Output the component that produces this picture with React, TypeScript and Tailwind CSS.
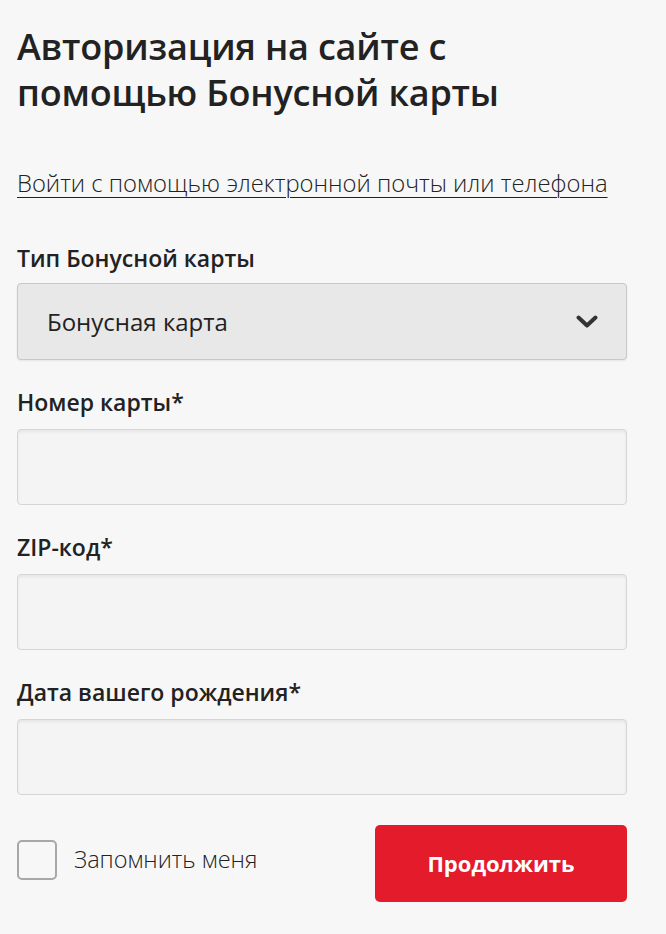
import { useState } from "react"

const font = { fontFamily: '"Open Sans", "Noto Sans", sans-serif' }

function Field({ label }: { label: string }) {
  return (
    <div className="flex flex-col">
      <label className="text-[23px] font-semibold text-[#222] leading-[32px] mb-[11px]">{label}</label>
      <input
        type="text"
        className="h-[76px] w-full rounded-[4px] border border-[#d6d6d6] bg-[#f4f4f4] shadow-[inset_0_2px_3px_rgba(0,0,0,0.06)] outline-none"
      />
    </div>
  )
}

export default function App() {
  const [remember, setRemember] = useState(false)

  return (
    <div className="min-h-[934px] w-[666px] bg-[#f7f7f7] pl-[17px] pr-[39px] pt-[24px]" style={font}>
      <h1 className="text-[36px] font-semibold leading-[46px] text-[#222] tracking-[-0.2px]">
        Авторизация на сайте с<br />помощью Бонусной карты
      </h1>

      <a href="#" className="mt-[52px] block text-[23.8px] font-light leading-[30px] text-[#222] underline underline-offset-[5px] decoration-1">
        Войти с помощью электронной почты или телефона
      </a>

      <div className="mt-[44px] flex flex-col">
        <label className="text-[23px] font-semibold text-[#222] leading-[32px] mb-[9px]">Тип Бонусной карты</label>
        <button className="flex h-[77px] w-full items-center justify-between rounded-[4px] border border-[#c8c8c8] bg-[#e8e8e8] pl-[29px] pr-[28px] shadow-[0_1px_2px_rgba(0,0,0,0.08)]">
          <span className="text-[24px] font-medium text-[#222]">Бонусная карта</span>
          <svg width="22" height="14" viewBox="0 0 22 14" fill="none">
            <path d="M2.5 2.5L11 10.5L19.5 2.5" stroke="#333" strokeWidth="4" strokeLinecap="round" strokeLinejoin="round" />
          </svg>
        </button>
      </div>

      <div className="mt-[26px] flex flex-col gap-[26px]">
        <Field label="Номер карты*" />
        <Field label="ZIP-код*" />
        <Field label="Дата вашего рождения*" />
      </div>

      <div className="mt-[30px] flex items-center justify-between">
        <label className="mb-[8px] flex items-center gap-[17px] cursor-pointer">
          <input
            type="checkbox"
            checked={remember}
            onChange={() => setRemember(!remember)}
            className="h-[40px] w-[40px] appearance-none rounded-[5px] border-2 border-[#a8a8a8] bg-[#f7f7f7]"
          />
          <span className="text-[23.5px] font-light text-[#222]">Запомнить меня</span>
        </label>
        <button className="h-[77px] w-[252px] rounded-[5px] bg-[#e31b2b] text-[22px] font-bold text-white">
          Продолжить
        </button>
      </div>
    </div>
  )
}
